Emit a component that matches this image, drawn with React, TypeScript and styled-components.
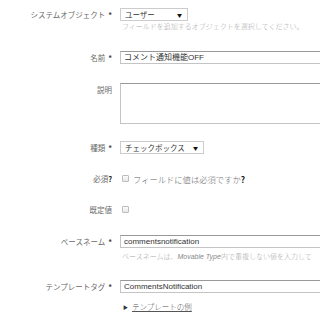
import styled, { createGlobalStyle } from "styled-components";

const GlobalStyle = createGlobalStyle`
  html, body {
    margin: 0;
    padding: 0;
    background: #fff;
  }
  body {
    width: 320px;
    height: 320px;
    overflow: hidden;
    font-family: "Noto Sans CJK JP", "Liberation Sans", sans-serif;
  }
`;

const Form = styled.div`
  display: flex;
  flex-direction: column;
  padding-top: 8px;
`;

const Row = styled.div<{ $top: number }>`
  display: grid;
  grid-template-columns: 112px 1fr;
  column-gap: 8px;
  margin-top: ${(p) => p.$top}px;
`;

const Label = styled.div`
  text-align: right;
  font-size: 7.5px;
  font-weight: 400;
  line-height: 13px;
  color: #6a6a6a;
  white-space: nowrap;
`;

const Req = styled.span`
  margin-left: 3px;
  font-weight: 700;
  color: #444;
`;

const Quest = styled.span`
  font-weight: 700;
  color: #222;
`;

const Field = styled.div`
  display: flex;
  flex-direction: column;
  min-width: 0;
`;

const Select = styled.div<{ $w: number }>`
  width: ${(p) => p.$w}px;
  height: 13px;
  box-sizing: border-box;
  border: 1px solid #ccc;
  background: #fff;
  display: flex;
  align-items: center;
  justify-content: space-between;
  padding: 0 5px 0 4px;
  font-size: 7.5px;
  color: #333;
`;

const Caret = styled.span`
  font-size: 5px;
  color: #111;
`;

const Hint = styled.div<{ $top?: number }>`
  margin-top: ${(p) => p.$top ?? 0}px;
  padding-left: 2px;
  font-size: 7px;
  font-weight: 300;
  line-height: 10px;
  color: #aaa;
  white-space: nowrap;

  b {
    font-family: "Liberation Sans", sans-serif;
    font-style: italic;
    color: #888;
  }
`;

const TextInput = styled.div`
  width: 300px;
  height: 13px;
  box-sizing: border-box;
  border: 1px solid #c4c4c4;
  border-top-color: #999;
  padding: 0 3px;
  font-family: "Liberation Sans", "Noto Sans CJK JP", sans-serif;
  font-size: 8px;
  line-height: 11px;
  color: #333;
  white-space: nowrap;
`;

const TextArea = styled.div`
  width: 300px;
  height: 41px;
  box-sizing: border-box;
  border: 1px solid #c4c4c4;
  border-top-color: #999;
`;

const CheckLine = styled.label`
  display: flex;
  align-items: center;
  height: 13px;
  gap: 4px;
  padding-left: 2px;
  font-size: 8.3px;
  font-weight: 300;
  color: #666;
`;

const Box = styled.span`
  width: 7px;
  height: 7px;
  box-sizing: border-box;
  border: 1px solid #bdbdbd;
  border-radius: 1px;
  background: linear-gradient(#fbfbfb, #e8e8e8);
`;

const ExampleLink = styled.div`
  margin-top: 8px;
  padding-left: 3px;
  display: flex;
  align-items: center;
  gap: 4px;
  font-size: 7.5px;
  font-weight: 300;
  line-height: 12px;
  color: #555;

  span {
    text-decoration: underline;
  }
`;

const Tri = styled.i`
  font-style: normal;
  font-size: 5px;
  color: #333;
`;

export default function App() {
  return (
    <>
      <GlobalStyle />
      <Form>
        <Row $top={0}>
          <Label>
            システムオブジェクト<Req>*</Req>
          </Label>
          <Field>
            <Select $w={68}>
              ユーザー<Caret>▼</Caret>
            </Select>
            <Hint>フィールドを追加するオブジェクトを選択してください。</Hint>
          </Field>
        </Row>

        <Row $top={20}>
          <Label>
            名前<Req>*</Req>
          </Label>
          <Field>
            <TextInput>コメント通知機能OFF</TextInput>
          </Field>
        </Row>

        <Row $top={19}>
          <Label>説明</Label>
          <Field>
            <TextArea />
          </Field>
        </Row>

        <Row $top={17}>
          <Label>
            種類<Req>*</Req>
          </Label>
          <Field>
            <Select $w={84}>
              チェックボックス<Caret>▼</Caret>
            </Select>
          </Field>
        </Row>

        <Row $top={18}>
          <Label>
            必須<Quest>?</Quest>
          </Label>
          <Field>
            <CheckLine>
              <Box />
              <span>
                フィールドに値は必須ですか<Quest>?</Quest>
              </span>
            </CheckLine>
          </Field>
        </Row>

        <Row $top={18}>
          <Label>既定値</Label>
          <Field>
            <CheckLine>
              <Box />
            </CheckLine>
          </Field>
        </Row>

        <Row $top={19}>
          <Label>
            ベースネーム<Req>*</Req>
          </Label>
          <Field>
            <TextInput>commentsnotification</TextInput>
            <Hint $top={3}>
              ベースネームは、<b>Movable Type</b>内で重複しない値を入力して
            </Hint>
          </Field>
        </Row>

        <Row $top={18}>
          <Label>
            テンプレートタグ<Req>*</Req>
          </Label>
          <Field>
            <TextInput>CommentsNotification</TextInput>
            <ExampleLink>
              <Tri>▶</Tri>
              <span>テンプレートの例</span>
            </ExampleLink>
          </Field>
        </Row>
      </Form>
    </>
  );
}
